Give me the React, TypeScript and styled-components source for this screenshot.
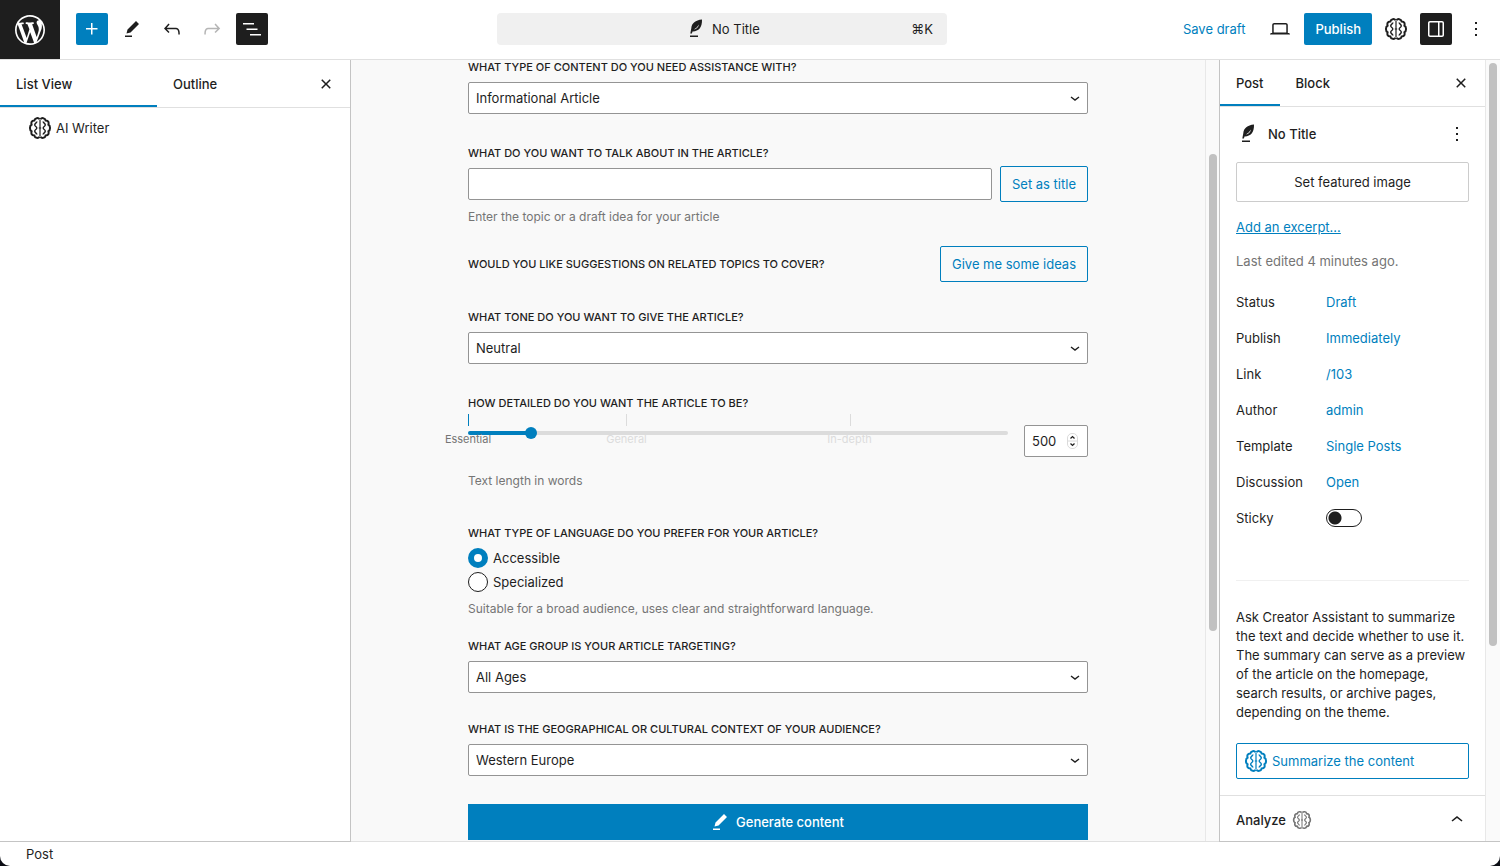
import React, { useState } from "react";
import styled, { createGlobalStyle, css } from "styled-components";

const BLUE = "#007fbe";
const INK = "#1e1e1e";
const MUTED = "#757575";
const LINE = "#e0e0e0";
const EDGE = "#c4c4c4";

const GlobalStyle = createGlobalStyle`
  *, *::before, *::after { box-sizing: border-box; }
  html, body, #root { height: 100%; }
  body {
    margin: 0;
    background: #0b0d14;
    color: ${INK};
    font-family: Inter, "Liberation Sans", sans-serif;
    font-size: 13px;
    line-height: 20px;
  }
  button, input, select { font: inherit; color: inherit; margin: 0; }
  h2, p, dl, dd { margin: 0; }
`;

/* ---------- icons ---------- */

const PATHS = {
  plus: "M11 12.5V17.5H12.5V12.5H17.5V11H12.5V6H11V11H6V12.5H11Z",
  edit: "m19 7-3-3-8.5 8.5-1 4 4-1L19 7Zm-7 11.5H5V20h7v-1.5Z",
  undo: "M18.3 11.7c-.6-.6-1.4-.9-2.3-.9H6.7l2.9-3.3-1.1-1-4.5 5L8.5 16l1-1-2.7-2.7H16c.5 0 .9.2 1.3.5 1 1 1 3.4 1 4.5v.3h1.5v-.2c0-1.5 0-4.3-1.5-5.7z",
  redo: "M15.6 6.5l-1.1 1 2.9 3.3H8c-.9 0-1.7.3-2.3.9-1.4 1.5-1.4 4.2-1.4 5.6v.2h1.5v-.3c0-1.1 0-3.5 1-4.5.3-.3.7-.5 1.3-.5h9.2L14.5 15l1.1 1.1 4.6-4.6-4.6-5z",
  list: "M3 6h11v1.5H3V6Zm3.5 5.5h11V13h-11v-1.5ZM21 17H10v1.5h11V17Z",
  close: "M12 13.06l3.712 3.713 1.061-1.06L13.061 12l3.712-3.712-1.06-1.06L12 10.938 8.288 7.227l-1.061 1.06L10.939 12l-3.712 3.712 1.06 1.061L12 13.061z",
  laptop: "M20.5 16h-.7V8c0-1.1-.9-2-2-2H6.2c-1.1 0-2 .9-2 2v8h-.7c-.8 0-1.5.7-1.5 1.5h20c0-.8-.7-1.5-1.5-1.5zM5.7 8c0-.3.2-.5.5-.5h11.6c.3 0 .5.2.5.5v7.6H5.7V8z",
  drawer: "M18 4H6c-1.1 0-2 .9-2 2v12c0 1.1.9 2 2 2h12c1.1 0 2-.9 2-2V6c0-1.1-.9-2-2-2zm-4 14.5H6c-.3 0-.5-.2-.5-.5V6c0-.3.2-.5.5-.5h8v13zm4.5-.5c0 .3-.2.5-.5.5h-2.5v-13H18c.3 0 .5.2.5.5v12z",
  more: "M13 19h-2v-2h2v2zm0-6h-2v-2h2v2zm0-6h-2V5h2v2z",
  up: "M6.5 12.4L12 8l5.5 4.4-.9 1.2L12 10l-4.5 3.6-1-1.2z",
  feather: "M18 2.6C11.5 3.2 7.6 6.400 7.300 11.200L6.300 16.600H7.900L8.500 14.400C14.400 14.600 18.300 11 18 2.600ZM14.900 7.600C14.700 10.300 12.700 12.200 9.800 12.600C11.900 11.400 13.600 9.800 14.900 7.600ZM6 18.500H14V20H6Z",
} as const;

function Icon({ name, size = 24 }: { name: keyof typeof PATHS; size?: number }) {
  return (
    <svg width={size} height={size} viewBox="0 0 24 24" fill="currentColor" fillRule="evenodd" aria-hidden="true">
      <path d={PATHS[name]} />
    </svg>
  );
}

function BrainHalf() {
  return (
    <>
      <path d="M11.500 3.200C10.500 1.600 6.900 1.600 6.400 4.400C3.500 4.300 2.900 6.500 3.600 8.700C1.400 9.800 1.400 14.200 3.600 15.300C2.900 17.500 3.500 19.700 6.400 19.600C6.900 22.400 10.500 22.400 11.500 20.800" strokeWidth="2" />
      <path d="M8.900 5.400C8.900 7 6.500 7.300 6.700 9C6.900 10.500 8.800 10.500 8.800 12C8.800 13.500 6.900 13.500 6.700 15C6.500 16.700 8.900 17 8.900 18.600" strokeWidth="1.400" />
    </>
  );
}

function Brain({ size = 24 }: { size?: number }) {
  return (
    <svg width={size} height={size} viewBox="0 0 24 24" fill="none" stroke="currentColor" aria-hidden="true">
      <BrainHalf />
      <g transform="matrix(-1 0 0 1 24 0)">
        <BrainHalf />
      </g>
      <path d="M12 3.500V20.500M10.800 12H13.200" strokeWidth="1.200" />
    </svg>
  );
}

function WordPressLogo() {
  return (
    <svg width="36" height="36" viewBox="-2 -2 24 24" fill="currentColor" aria-hidden="true">
      <path d="M20 10c0-5.51-4.49-10-10-10C4.48 0 0 4.49 0 10c0 5.52 4.48 10 10 10 5.51 0 10-4.48 10-10zM7.78 15.37L4.37 6.22c.55-.02 1.17-.08 1.17-.08.5-.06.44-1.13-.06-1.11 0 0-1.45.11-2.37.11-.18 0-.37 0-.58-.01C4.12 2.69 6.87 1.11 10 1.11c2.33 0 4.45.87 6.05 2.34-.68-.11-1.65.39-1.65 1.58 0 .74.45 1.36.9 2.1.35.61.55 1.36.55 2.46 0 1.49-1.4 5-1.4 5l-3.03-8.37c.54-.02.82-.17.82-.17.5-.05.44-1.25-.06-1.22 0 0-1.44.12-2.38.12-.87 0-2.33-.12-2.33-.12-.5-.03-.56 1.2-.06 1.22l.92.08 1.26 3.41zM17.41 10c.24-.64.74-1.87.43-4.25.7 1.29 1.05 2.71 1.05 4.25 0 3.29-1.73 6.24-4.4 7.78.97-2.59 1.94-5.2 2.92-7.78zM6.1 18.09C3.12 16.65 1.11 13.53 1.11 10c0-1.3.23-2.48.72-3.59C3.25 10.3 4.67 14.2 6.1 18.09zm4.03-6.63l2.58 6.98c-.86.29-1.76.45-2.71.45-.79 0-1.57-.11-2.29-.33.81-2.38 1.62-4.74 2.42-7.1z" />
    </svg>
  );
}

/* ---------- frame ---------- */

const Shell = styled.div`
  display: flex;
  flex-direction: column;
  height: 100vh;
  overflow: hidden;
  background: #fff;
  border-radius: 0 0 10px 10px;
`;

const TopBar = styled.header`
  display: flex;
  align-items: center;
  flex: none;
  height: 60px;
  padding-bottom: 1px;
  border-bottom: 1px solid ${LINE};
`;

const Logo = styled.a`
  display: grid;
  place-items: center;
  align-self: stretch;
  width: 60px;
  margin: 0 8px -1px 0;
  background: ${INK};
  color: #fff;
`;

const ToolGroup = styled.div`
  display: flex;
  align-items: center;
  gap: 8px;
  height: 100%;
`;

const EndTools = styled(ToolGroup)`
  padding-right: 8px;
`;

const IconButton = styled.button<{ $tone?: "blue" | "dark" }>`
  display: grid;
  place-items: center;
  flex: none;
  width: 32px;
  height: 32px;
  padding: 0;
  border: 0;
  border-radius: 2px;
  background: transparent;
  cursor: pointer;
  ${(p) => p.$tone === "blue" && css`background: ${BLUE}; color: #fff;`}
  ${(p) => p.$tone === "dark" && css`background: ${INK}; color: #fff;`}
  &:disabled { color: #b5b5b5; cursor: default; }
`;

const TitleSlot = styled.div`
  display: flex;
  flex: 1;
  justify-content: center;
  padding-left: 4px;
`;

const TitleBar = styled.button`
  display: grid;
  grid-template-columns: 1fr auto 1fr;
  align-items: center;
  width: 100%;
  max-width: 450px;
  height: 32px;
  padding: 0 14px;
  border: 0;
  border-radius: 4px;
  background: #f0f0f0;
  cursor: pointer;
`;

const TitleName = styled.span`
  display: flex;
  align-items: center;
  grid-column: 2;
  gap: 4px;
`;

const Shortcut = styled.span`
  justify-self: end;
`;

const TextButton = styled.button<{ $solid?: boolean }>`
  height: 32px;
  padding: 0 11px;
  border: 0;
  border-radius: 2px;
  background: ${(p) => (p.$solid ? BLUE : "transparent")};
  color: ${(p) => (p.$solid ? "#fff" : BLUE)};
  font-weight: ${(p) => (p.$solid ? 500 : 400)};
  white-space: nowrap;
  cursor: pointer;
`;

const Workspace = styled.div`
  display: flex;
  flex: 1;
  min-height: 0;
`;

const Footer = styled.footer`
  display: flex;
  align-items: center;
  flex: none;
  height: 24px;
  padding-left: 26px;
`;

/* ---------- side panels ---------- */

const ListPanel = styled.aside`
  flex: none;
  width: 351px;
  border-right: 1px solid ${EDGE};
  border-bottom: 1px solid ${EDGE};
`;

const Tabs = styled.div<{ $tall?: boolean }>`
  display: flex;
  align-items: center;
  height: ${(p) => (p.$tall ? 48 : 47)}px;
  padding-right: 8px;
  border-bottom: 1px solid ${LINE};
`;

const Tab = styled.button<{ $active?: boolean; $wide?: boolean }>`
  align-self: stretch;
  min-width: ${(p) => (p.$wide ? "157px" : "0")};
  padding: 0 16px;
  border: 0;
  background: transparent;
  box-shadow: ${(p) => (p.$active ? `inset 0 -2px ${BLUE}` : "none")};
  font-weight: 500;
  text-align: left;
  cursor: pointer;
`;

const TabSpacer = styled.span`
  flex: 1;
`;

const BlockRow = styled.a`
  display: flex;
  align-items: center;
  gap: 4px;
  height: 40px;
  padding-left: 28px;
  color: inherit;
  text-decoration: none;
`;

const Settings = styled.aside`
  display: flex;
  flex: none;
  width: 281px;
  border-left: 1px solid ${EDGE};
  border-bottom: 1px solid ${EDGE};
`;

const SettingsBody = styled.div`
  flex: 1;
  min-width: 0;
  overflow: hidden;
`;

const Section = styled.section`
  display: flex;
  flex-direction: column;
  padding: 11px 16px 16px;
`;

const PostHead = styled.div`
  display: flex;
  align-items: center;
  gap: 8px;
  height: 32px;
  margin: 0 -4px 12px 0;
`;

const PostTitle = styled.h2`
  flex: 1;
  font-size: 13px;
  font-weight: 500;
`;

const FeaturedButton = styled.button`
  height: 40px;
  border: 1px solid #ccc;
  border-radius: 2px;
  background: #fff;
  cursor: pointer;
`;

const ExcerptLink = styled.a`
  align-self: flex-start;
  margin-top: 15px;
  color: ${BLUE};
`;

const Edited = styled.p`
  margin: 14px 0 13px;
  color: ${MUTED};
`;

const Facts = styled.dl`
  display: grid;
  grid-template-columns: 90px 1fr;
  grid-auto-rows: 36px;
  align-items: center;
`;

const FactLink = styled.a`
  color: ${BLUE};
  text-decoration: none;
`;

const Toggle = styled.input`
  display: block;
  appearance: none;
  width: 36px;
  height: 18px;
  border: 1px solid ${INK};
  border-radius: 9px;
  background: radial-gradient(circle at 8px 8px, ${INK} 6px, transparent 7px) #fff;
  cursor: pointer;
  &:checked {
    background: radial-gradient(circle at 26px 8px, #fff 6px, transparent 7px) ${BLUE};
  }
`;

const Divider = styled.hr`
  width: 100%;
  margin: 44px 0 27px;
  border: 0;
  border-top: 1px solid #f0f0f0;
`;

const Blurb = styled.p`
  margin-bottom: 21px;
  line-height: 19px;
`;

const OutlineButton = styled.button<{ $start?: boolean }>`
  display: flex;
  align-items: center;
  justify-content: ${(p) => (p.$start ? "flex-start" : "center")};
  gap: 4px;
  flex: none;
  height: 36px;
  padding: 0 ${(p) => (p.$start ? 7 : 11)}px;
  border: 1px solid ${BLUE};
  border-radius: 2px;
  background: transparent;
  color: ${BLUE};
  white-space: nowrap;
  cursor: pointer;
`;

const PanelToggle = styled.button`
  display: flex;
  align-items: center;
  gap: 6px;
  width: 100%;
  height: 48px;
  padding: 0 16px;
  border: 0;
  border-top: 1px solid ${LINE};
  background: #fff;
  font-weight: 500;
  cursor: pointer;
`;

const Faded = styled.span`
  display: flex;
  flex: 1;
  color: ${MUTED};
`;

/* ---------- scroll bars ---------- */

const Track = styled.div<{ $slim?: boolean }>`
  display: flex;
  flex-direction: column;
  flex: none;
  width: ${(p) => (p.$slim ? 14 : 15)}px;
  padding-left: 3px;
  border-left: 1px solid #e8e8e8;
  background: #fafafa;
`;

const Thumb = styled.div`
  width: 8px;
  border-radius: 4px;
  background: #c1c1c1;
`;

const Rest = styled.div``;

function ScrollBar({ before, size, after, slim }: { before: number; size: number; after: number; slim?: boolean }) {
  return (
    <Track $slim={slim} aria-hidden="true">
      <Rest style={{ flex: before }} />
      <Thumb style={{ flex: size }} />
      <Rest style={{ flex: after }} />
    </Track>
  );
}

/* ---------- form ---------- */

const Canvas = styled.main`
  display: flex;
  flex: 1;
  min-width: 0;
  border-bottom: 1px solid ${LINE};
  background: #f9f9f9;
`;

const Scroller = styled.div`
  flex: 1;
  min-width: 0;
  overflow: hidden;
`;

const Form = styled.form`
  display: flex;
  flex-direction: column;
  gap: 29px;
  max-width: 620px;
  margin: 0 auto;
`;

const Field = styled.div<{ $spaced?: boolean }>`
  display: flex;
  flex-direction: column;
  gap: 8px;
  margin-top: ${(p) => (p.$spaced ? 3 : 0)}px;
`;

const labelText = css`
  display: block;
  padding: 0;
  font-size: 11px;
  font-weight: 500;
  line-height: 14px;
  text-transform: uppercase;
`;

const Label = styled.label`
  ${labelText}
`;

const Legend = styled.legend`
  ${labelText}
  margin-bottom: 8px;
`;

const Question = styled.span`
  ${labelText}
`;

const Help = styled.p`
  color: ${MUTED};
  font-size: 12px;
  line-height: 16px;
`;

const boxed = css`
  height: 32px;
  padding: 0 7px;
  border: 1px solid #949494;
  border-radius: 2px;
  background: #fff;
`;

const SelectBox = styled.div`
  display: grid;
  align-items: center;
  & > * { grid-area: 1 / 1; }
  & > svg { justify-self: end; margin-right: 8px; pointer-events: none; }
`;

const Select = styled.select`
  ${boxed}
  appearance: none;
  width: 100%;
`;

const TextInput = styled.input`
  ${boxed}
  flex: 1;
  min-width: 0;
`;

const Row = styled.div<{ $spread?: boolean }>`
  display: flex;
  align-items: center;
  justify-content: ${(p) => (p.$spread ? "space-between" : "flex-start")};
  gap: 8px;
  margin-top: ${(p) => (p.$spread ? -8 : -2)}px;
  margin-bottom: -1px;
`;

const SliderRow = styled.div`
  display: flex;
  align-items: flex-end;
  gap: 16px;
  height: 39px;
  margin-bottom: 8px;
`;

const Slider = styled.div`
  position: relative;
  flex: 1;
  height: 43px;
`;

const Range = styled.input`
  display: block;
  appearance: none;
  width: 100%;
  height: 12px;
  margin-top: 13px;
  background: transparent;
  cursor: pointer;
  &::-webkit-slider-runnable-track {
    height: 4px;
    border-radius: 2px;
    background: linear-gradient(${BLUE}, ${BLUE}) 0 0 / var(--fill) 100% no-repeat #dcdcdc;
  }
  &::-webkit-slider-thumb {
    appearance: none;
    width: 12px;
    height: 12px;
    margin-top: -4px;
    border-radius: 50%;
    background: ${BLUE};
  }
`;

const Mark = styled.span<{ $on?: boolean }>`
  position: absolute;
  top: 0;
  width: 1px;
  height: 12px;
  background: ${(p) => (p.$on ? BLUE : "#dcdcdc")};
`;

const MarkLabel = styled.span<{ $on?: boolean }>`
  position: absolute;
  top: 18px;
  transform: translateX(-50%);
  color: ${(p) => (p.$on ? MUTED : "#dcdcdc")};
  font-size: 11px;
  line-height: 14px;
  white-space: nowrap;
`;

const NumberBox = styled.div`
  display: grid;
  align-items: center;
  width: 64px;
  & > * { grid-area: 1 / 1; }
  & > svg { justify-self: end; margin-right: 10px; pointer-events: none; }
`;

const NumberInput = styled.input`
  ${boxed}
  width: 100%;
  appearance: textfield;
  &::-webkit-inner-spin-button { display: none; }
`;

const RadioGroup = styled.fieldset`
  display: flex;
  flex-direction: column;
  gap: 4px;
  min-width: 0;
  margin: 8px 0 -7px;
  padding: 0;
  border: 0;
`;

const RadioLabel = styled.label`
  display: flex;
  align-items: center;
  gap: 5px;
  cursor: pointer;
`;

const Radio = styled.input`
  appearance: none;
  width: 20px;
  height: 20px;
  border: 1px solid ${INK};
  border-radius: 50%;
  background: #fff;
  &:checked {
    border: 6px solid ${BLUE};
  }
`;

const RadioHelp = styled(Help)`
  margin-top: 5px;
`;

const Generate = styled.button`
  display: flex;
  align-items: center;
  justify-content: center;
  gap: 4px;
  height: 36px;
  margin-top: -1px;
  padding: 0 4px 0 0;
  border: 0;
  background: ${BLUE};
  color: #fff;
  font-weight: 500;
  cursor: pointer;
`;

function Picker({ id, label, value }: { id: string; label: string; value: string }) {
  return (
    <Field>
      <Label htmlFor={id}>{label}</Label>
      <SelectBox>
        <Select id={id} defaultValue={value}>
          <option>{value}</option>
        </Select>
        <svg width="10" height="8" viewBox="0 0 10 8" fill="none" stroke={INK} strokeWidth="1.400" aria-hidden="true">
          <path d="M1 3L5 6L9 3" />
        </svg>
      </SelectBox>
    </Field>
  );
}

const MAX_WORDS = 4600;

const MARKS = [
  { name: "Essential", at: 0 },
  { name: "General", at: 1350 },
  { name: "In-depth", at: 3250 },
];

function LengthField() {
  const [words, setWords] = useState(500);
  const share = words / MAX_WORDS;
  const fill = { "--fill": `calc(6px + (100% - 12px) * ${share})` } as React.CSSProperties;
  return (
    <Field $spaced>
      <Label htmlFor="length">How detailed do you want the article to be?</Label>
      <SliderRow>
        <Slider>
          {MARKS.map((m) => (
            <React.Fragment key={m.name}>
              <Mark $on={m.at <= words} style={{ left: `${(m.at / MAX_WORDS) * 100}%` }} />
              <MarkLabel $on={m.at <= words} style={{ left: `${(m.at / MAX_WORDS) * 100}%` }}>
                {m.name}
              </MarkLabel>
            </React.Fragment>
          ))}
          <Range
            id="length"
            type="range"
            min={0}
            max={MAX_WORDS}
            value={words}
            style={fill}
            onChange={(e) => setWords(Number(e.target.value))}
          />
        </Slider>
        <NumberBox>
          <NumberInput
            type="number"
            aria-label="Text length in words"
            value={words}
            onChange={(e) => setWords(Number(e.target.value))}
          />
          <svg width="11" height="16" viewBox="0 0 11 16" fill="none" aria-hidden="true">
            <rect x=".5" y=".5" width="10" height="15" rx="4.500" fill="#fff" stroke="#dadada" />
            <path d="M.5 8H10.500" stroke="#dadada" />
            <path d="M3.500 5.500L5.500 3.600L7.500 5.500M3.500 10.500L5.500 12.400L7.500 10.500" stroke={INK} strokeWidth="1.300" />
          </svg>
        </NumberBox>
      </SliderRow>
      <Help>Text length in words</Help>
    </Field>
  );
}

const FACTS = [
  ["Status", "Draft"],
  ["Publish", "Immediately"],
  ["Link", "/103"],
  ["Author", "admin"],
  ["Template", "Single Posts"],
  ["Discussion", "Open"],
];

export default function App() {
  return (
    <>
      <GlobalStyle />
      <Shell>
        <TopBar>
          <ToolGroup>
            <Logo href="#" aria-label="View posts"><WordPressLogo /></Logo>
            <IconButton $tone="blue" aria-label="Add block"><Icon name="plus" /></IconButton>
            <IconButton aria-label="Tools"><Icon name="edit" /></IconButton>
            <IconButton aria-label="Undo"><Icon name="undo" /></IconButton>
            <IconButton aria-label="Redo" disabled><Icon name="redo" /></IconButton>
            <IconButton $tone="dark" aria-label="Document overview"><Icon name="list" /></IconButton>
          </ToolGroup>
          <TitleSlot>
            <TitleBar>
              <TitleName><Icon name="feather" />No Title</TitleName>
              <Shortcut>⌘K</Shortcut>
            </TitleBar>
          </TitleSlot>
          <EndTools>
            <TextButton>Save draft</TextButton>
            <IconButton aria-label="Preview"><Icon name="laptop" /></IconButton>
            <TextButton $solid>Publish</TextButton>
            <IconButton aria-label="Creator Assistant"><Brain /></IconButton>
            <IconButton $tone="dark" aria-label="Settings"><Icon name="drawer" /></IconButton>
            <IconButton aria-label="Options"><Icon name="more" /></IconButton>
          </EndTools>
        </TopBar>

        <Workspace>
          <ListPanel>
            <Tabs $tall>
              <Tab $active $wide>List View</Tab>
              <Tab>Outline</Tab>
              <TabSpacer />
              <IconButton aria-label="Close list view"><Icon name="close" /></IconButton>
            </Tabs>
            <BlockRow href="#"><Brain />AI Writer</BlockRow>
          </ListPanel>

          <Canvas>
            <Scroller>
              <Form onSubmit={(e) => e.preventDefault()}>
                <Picker id="kind" label="What type of content do you need assistance with?" value="Informational Article" />
                <Field $spaced>
                  <Label htmlFor="topic">What do you want to talk about in the article?</Label>
                  <Row>
                    <TextInput id="topic" type="text" />
                    <OutlineButton type="button">Set as title</OutlineButton>
                  </Row>
                  <Help>Enter the topic or a draft idea for your article</Help>
                </Field>
                <Row $spread>
                  <Question>Would you like suggestions on related topics to cover?</Question>
                  <OutlineButton type="button">Give me some ideas</OutlineButton>
                </Row>
                <Picker id="tone" label="What tone do you want to give the article?" value="Neutral" />
                <LengthField />
                <RadioGroup>
                  <Legend>What type of language do you prefer for your article?</Legend>
                  <RadioLabel><Radio type="radio" name="language" defaultChecked />Accessible</RadioLabel>
                  <RadioLabel><Radio type="radio" name="language" />Specialized</RadioLabel>
                  <RadioHelp>Suitable for a broad audience, uses clear and straightforward language.</RadioHelp>
                </RadioGroup>
                <Picker id="age" label="What age group is your article targeting?" value="All Ages" />
                <Picker id="region" label="What is the geographical or cultural context of your audience?" value="Western Europe" />
                <Generate type="submit"><Icon name="edit" />Generate content</Generate>
              </Form>
            </Scroller>
            <ScrollBar before={94} size={477} after={210} slim />
          </Canvas>

          <Settings>
            <SettingsBody>
              <Tabs>
                <Tab $active>Post</Tab>
                <Tab>Block</Tab>
                <TabSpacer />
                <IconButton aria-label="Close settings"><Icon name="close" /></IconButton>
              </Tabs>
              <Section>
                <PostHead>
                  <Icon name="feather" />
                  <PostTitle>No Title</PostTitle>
                  <IconButton aria-label="Post actions"><Icon name="more" /></IconButton>
                </PostHead>
                <FeaturedButton>Set featured image</FeaturedButton>
                <ExcerptLink href="#">Add an excerpt…</ExcerptLink>
                <Edited>Last edited 4 minutes ago.</Edited>
                <Facts>
                  {FACTS.map(([name, value]) => (
                    <React.Fragment key={name}>
                      <dt>{name}</dt>
                      <dd><FactLink href="#">{value}</FactLink></dd>
                    </React.Fragment>
                  ))}
                  <dt><label htmlFor="sticky">Sticky</label></dt>
                  <dd><Toggle id="sticky" type="checkbox" role="switch" /></dd>
                </Facts>
                <Divider />
                <Blurb>
                  Ask Creator Assistant to summarize the text and decide whether to use it. The summary can
                  serve as a preview of the article on the homepage, search results, or archive pages,
                  depending on the theme.
                </Blurb>
                <OutlineButton $start><Brain />Summarize the content</OutlineButton>
              </Section>
              <PanelToggle aria-expanded="true">
                Analyze
                <Faded><Brain size={20} /></Faded>
                <Icon name="up" />
              </PanelToggle>
            </SettingsBody>
            <ScrollBar before={3} size={583} after={195} />
          </Settings>
        </Workspace>

        <Footer>Post</Footer>
      </Shell>
    </>
  );
}
